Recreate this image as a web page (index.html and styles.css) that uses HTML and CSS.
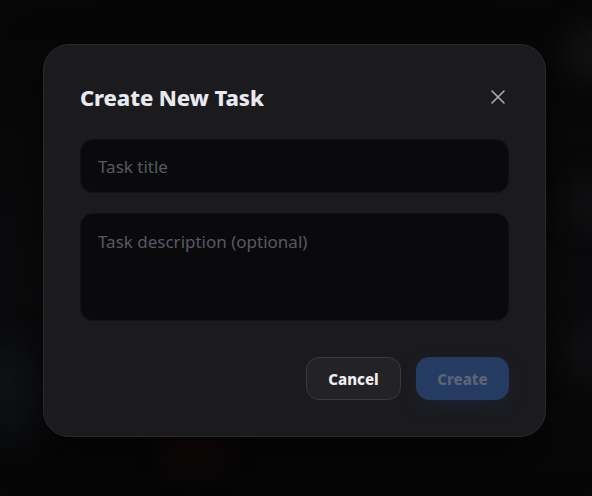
FILE: index.html
```html
<!DOCTYPE html>
<html>
<head>
<meta charset="utf-8">
<link rel="stylesheet" href="styles.css">
</head>
<body>
<div class="backdrop">
  <div class="blob b1"></div>
  <div class="blob b2"></div>
  <div class="blob b3"></div>
  <div class="blob b4"></div>
  <div class="blob b5"></div>
  <div class="modal">
    <div class="header">
      <h2 class="title">Create New Task</h2>
      <button class="close" aria-label="Close">
        <svg width="16" height="16" viewBox="0 0 16 16"><path d="M2 2 L14 14 M14 2 L2 14" stroke="#a9adb8" stroke-width="1.6" stroke-linecap="round" fill="none"/></svg>
      </button>
    </div>
    <div class="fields">
      <input class="input" type="text" placeholder="Task title">
      <textarea class="input area" placeholder="Task description (optional)"></textarea>
    </div>
    <div class="actions">
      <button class="btn cancel">Cancel</button>
      <button class="btn create" disabled>Create</button>
    </div>
  </div>
</div>
</body>
</html>
```
FILE: styles.css
```css
html, body {
  margin: 0;
  padding: 0;
  width: 592px;
  height: 496px;
  overflow: hidden;
  background: #070708;
  font-family: "Noto Sans", "Open Sans", sans-serif;
}
.backdrop {
  position: relative;
  width: 592px;
  height: 496px;
  box-sizing: border-box;
  padding: 44px 0 0 43px;
  background: linear-gradient(180deg, #060607 0%, #0b0b0d 60%, #060607 100%);
}
.blob {
  position: absolute;
  border-radius: 50%;
  filter: blur(18px);
}
.b1 { left: -30px; top: 340px; width: 80px; height: 100px; background: rgba(30,36,48,0.3); }
.b2 { left: 165px; top: 425px; width: 60px; height: 40px; background: rgba(80,12,12,0.3); }
.b3 { left: 568px; top: 30px; width: 45px; height: 45px; background: rgba(70,70,75,0.3); }
.b4 { left: 568px; top: 180px; width: 45px; height: 45px; background: rgba(55,55,60,0.25); }
.b5 { left: 568px; top: 330px; width: 45px; height: 45px; background: rgba(55,55,60,0.25); }
.modal {
  position: relative;
  width: 503px;
  height: 393px;
  box-sizing: border-box;
  padding: 36px 36px 36px 36px;
  background: #1b1b1e;
  border: 1px solid #29292d;
  border-radius: 26px;
  box-shadow: 0 20px 50px rgba(0,0,0,0.6);
  display: flex;
  flex-direction: column;
}
.header {
  display: flex;
  align-items: center;
  justify-content: space-between;
  height: 34px;
}
.title {
  margin: 0;
  font-size: 22px;
  font-weight: 800;
  color: #e7eaf0;
  letter-spacing: -0.1px;
}
.close {
  background: none;
  border: none;
  padding: 0;
  width: 20px;
  height: 20px;
  display: flex;
  align-items: center;
  justify-content: center;
  margin-right: 1px;
}
.fields {
  display: flex;
  flex-direction: column;
  gap: 20px;
  margin-top: 26px;
}
.input {
  box-sizing: border-box;
  width: 429px;
  height: 54px;
  background: #0a0a0c;
  border: 1px solid #121215;
  border-radius: 13px;
  padding: 0 17px;
  font-family: inherit;
  font-size: 17px;
  color: #e0e0e0;
  outline: none;
}
.input::placeholder { color: #575a62; }
.area {
  height: 108px;
  padding: 16px 17px;
  resize: none;
}
.actions {
  display: flex;
  justify-content: flex-end;
  gap: 15px;
  margin-top: 36px;
}
.btn {
  height: 43px;
  border-radius: 13px;
  font-family: inherit;
  font-size: 15px;
  font-weight: 800;
  padding: 0;
}
.cancel {
  width: 95px;
  background: #232326;
  border: 1px solid #3a3a3e;
  color: #eceef3;
}
.create {
  width: 93px;
  background: #253b61;
  border: 1px solid #253b61;
  color: #5d6574;
  box-shadow: 0 6px 18px rgba(30,50,90,0.25);
}
```
